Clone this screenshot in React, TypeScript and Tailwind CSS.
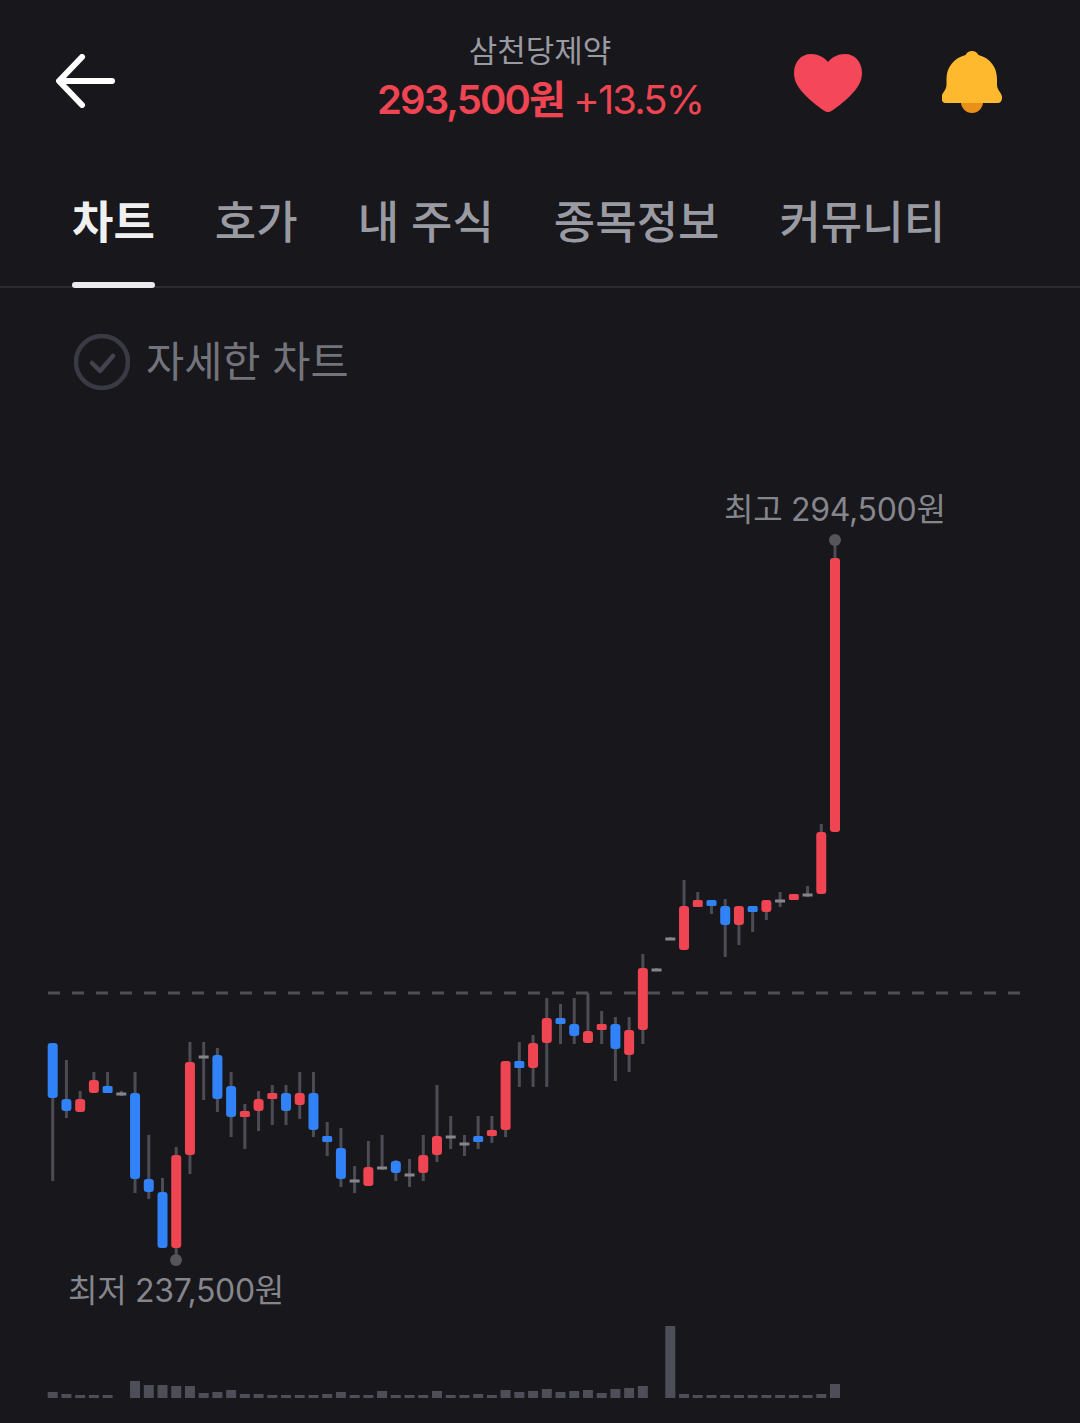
import React from "react";

// [body top, body bottom, wick top, wick bottom, type]
type Candle = [number, number, number, number, "r" | "b" | "d"];

const candles: Candle[] = [
  [1043, 1098, 1043, 1181, "b"],
  [1099, 1111, 1060, 1118, "b"],
  [1099, 1112, 1091, 1112, "r"],
  [1080, 1093, 1072, 1093, "r"],
  [1086, 1093, 1072, 1093, "b"],
  [1094, 1094, 1091, 1096, "d"],
  [1093, 1179, 1072, 1193, "b"],
  [1179, 1192, 1135, 1199, "b"],
  [1192, 1248, 1178, 1248, "b"],
  [1155, 1248, 1147, 1256, "r"],
  [1062, 1155, 1042, 1174, "r"],
  [1057, 1057, 1042, 1100, "d"],
  [1055, 1099, 1048, 1112, "b"],
  [1086, 1117, 1072, 1137, "b"],
  [1111, 1117, 1104, 1149, "r"],
  [1099, 1111, 1091, 1131, "r"],
  [1093, 1099, 1085, 1125, "r"],
  [1093, 1111, 1085, 1125, "b"],
  [1093, 1105, 1072, 1119, "r"],
  [1093, 1130, 1072, 1137, "b"],
  [1136, 1142, 1122, 1156, "b"],
  [1148, 1179, 1128, 1187, "b"],
  [1181, 1181, 1166, 1193, "d"],
  [1167, 1186, 1141, 1186, "r"],
  [1168, 1168, 1135, 1170, "d"],
  [1161, 1173, 1160, 1181, "b"],
  [1175, 1175, 1159, 1187, "d"],
  [1155, 1173, 1135, 1181, "r"],
  [1136, 1155, 1085, 1162, "r"],
  [1137, 1137, 1116, 1149, "d"],
  [1144, 1144, 1135, 1156, "d"],
  [1136, 1142, 1116, 1149, "b"],
  [1130, 1136, 1116, 1143, "r"],
  [1061, 1130, 1061, 1137, "r"],
  [1061, 1068, 1042, 1087, "b"],
  [1043, 1068, 1035, 1087, "r"],
  [1018, 1043, 998, 1087, "r"],
  [1018, 1024, 1004, 1044, "b"],
  [1024, 1036, 998, 1044, "b"],
  [1031, 1043, 993, 1043, "r"],
  [1024, 1030, 1011, 1044, "r"],
  [1024, 1049, 1017, 1081, "b"],
  [1030, 1055, 1017, 1072, "r"],
  [968, 1030, 954, 1044, "r"],
  [970, 970, 968, 971, "d"],
  [939, 939, 937, 940, "d"],
  [906, 950, 880, 950, "r"],
  [900, 907, 892, 907, "r"],
  [900, 906, 900, 914, "b"],
  [906, 925, 899, 957, "b"],
  [906, 925, 906, 945, "r"],
  [906, 912, 906, 932, "b"],
  [900, 912, 900, 920, "r"],
  [901, 901, 892, 907, "d"],
  [894, 900, 894, 900, "r"],
  [895, 895, 886, 897, "d"],
  [832, 894, 824, 894, "r"],
  [558, 832, 540, 832, "r"],
];

const volumes = [
  6, 4, 3, 3, 3, 0, 17, 13, 13, 12, 12, 5, 6, 8, 4, 4, 3, 3, 3, 3, 4, 6, 3, 3, 7, 3, 3, 3, 7, 3, 3, 4, 3, 8, 6, 7, 9,
  6, 7, 8, 5, 9, 10, 12, 0, 72, 4, 3, 3, 3, 3, 3, 3, 3, 3, 3, 4, 14,
];

const fill = { r: "#ef4452", b: "#3182f6", d: "#85858c" };
const STEP = (835 - 52.7) / 57;
const BASE = 1398;
const CHART_TOP = 470;
const CHART_H = 953;

const tabs = ["차트", "호가", "내 주식", "종목정보", "커뮤니티"];

const CandleChart = () => (
  <svg
    className="block w-[1080px]"
    height={CHART_H}
    viewBox={`0 ${CHART_TOP} 1080 ${CHART_H}`}
    xmlns="http://www.w3.org/2000/svg"
  >
    <line x1="48" x2="1020" y1="993" y2="993" stroke="#4f4f55" strokeWidth="3" strokeDasharray="12 12" />
    {candles.map(([top, bottom, wickTop, wickBottom, type], i) => {
      const x = 52.7 + i * STEP;
      return (
        <g key={i}>
          <rect x={x - 1.5} y={wickTop} width="3" height={wickBottom - wickTop} fill="#4c4c54" />
          {type === "d" ? (
            <rect x={x - 5} y={top - 1.5} width="10" height="3" fill={fill.d} />
          ) : (
            <rect x={x - 5} y={top} width="10" height={bottom - top} rx={bottom - top < 8 ? 1.5 : 3} fill={fill[type]} />
          )}
        </g>
      );
    })}
    <circle cx="835" cy="540" r="6" fill="#55555b" />
    <circle cx="176" cy="1260" r="6" fill="#55555b" />
    {volumes.map((h, i) =>
      h > 0 ? <rect key={i} x={47.7 + i * STEP} y={BASE - h} width="10" height={h} fill="#4e4e58" /> : null,
    )}
  </svg>
);

const App = () => {
  return (
    <div
      className="w-[1080px] h-[1423px] overflow-hidden bg-[#17171c] text-[#9a9aa2]"
      style={{ fontFamily: '"Inter", "Noto Sans CJK KR", sans-serif' }}
    >
      {/* header */}
      <div className="grid grid-cols-[1fr_auto_1fr] items-start pt-[32px] h-[167px]">
        <div className="pl-[56px] pt-[22px]">
          <svg width="60" height="54" viewBox="0 0 60 54" fill="none" stroke="#ffffff" strokeWidth="6" strokeLinecap="round" strokeLinejoin="round">
            <path d="M26 3 3 27l23 24" />
            <path d="M4 27h52" />
          </svg>
        </div>
        <div className="flex flex-col items-center">
          <div className="text-[31px] leading-[38px] text-[#9a9aa2]">삼천당제약</div>
          <div className="mt-[6px] text-[40px] leading-[48px] tracking-[-1.9px] text-[#ef4452] whitespace-nowrap">
            <span className="font-semibold">293,500원</span> <span>+13.5%</span>
          </div>
        </div>
        <div className="flex justify-end items-start gap-[80px] pr-[78px] pt-[19px]">
          <svg className="mt-[3px]" width="68" height="58" viewBox="0 0 68 58">
            <path
              d="M34 8C30 3 24 0 17 0 7 0 0 8 0 19c0 9 5 16 12 23 6 6 14 12 18.500 15 2.500 1.500 4.500 1.500 7 0C42 54 50 48 56 42c7-7 12-14 12-23C68 8 61 0 51 0 44 0 38 3 34 8Z"
              fill="#f4475a"
            />
          </svg>
          <svg width="60" height="62" viewBox="0 0 60 62">
            <path d="M19 50h22v1a11 11 0 0 1-22 0Z" fill="#e8901a" />
            <path
              d="M30 0c3 0 5 1.500 6.500 4C48 7 55 16 55 28v6c0 3 1.500 5 3.500 8l1 2c1.500 3 0 8-3 8H3c-3 0-4.500-5-3-8l1-2c2-3 3.500-5 3.500-8v-6C4.500 16 12 7 23.500 4 25 1.500 27 0 30 0Z"
              fill="#ffb92e"
            />
          </svg>
        </div>
      </div>

      {/* tabs */}
      <div className="flex gap-[60px] px-[72px] h-[121px] border-b-2 border-[#2c2c33]">
        {tabs.map((tab, i) => (
          <div key={tab} className="relative pt-[26px]">
            <span
              className={`text-[45px] leading-[60px] whitespace-nowrap ${
                i === 0 ? "font-bold text-[#f0f0f0]" : "font-medium text-[#9a9aa2]"
              }`}
            >
              {tab}
            </span>
            {i === 0 && (
              <div className="absolute left-0 right-0 bottom-[-2px] h-[6px] rounded-[3px] bg-[#ebebeb]" />
            )}
          </div>
        ))}
      </div>

      {/* detail toggle */}
      <div className="flex items-start gap-[16px] pl-[74px] pt-[46px] h-[182px]">
        <svg width="56" height="56" viewBox="0 0 56 56" fill="none" stroke="#3a3a45" strokeWidth="4.500">
          <circle cx="28" cy="28" r="26" />
          <path d="M18 29l8 8 13-15" stroke="#44444f" strokeLinecap="round" strokeLinejoin="round" />
        </svg>
        <span className="text-[41.5px] leading-[56px] text-[#73737b]">자세한 차트</span>
      </div>

      {/* chart */}
      <div className="relative">
        <CandleChart />
        <div className="absolute left-[724px] top-[18px] text-[32px] leading-[44px] tracking-[-0.3px] text-[#85858c] whitespace-nowrap">
          최고 294,500원
        </div>
        <div className="absolute left-[68px] top-[799px] text-[32px] leading-[44px] tracking-[-0.3px] text-[#85858c] whitespace-nowrap">
          최저 237,500원
        </div>
      </div>
    </div>
  );
};

export default App;
